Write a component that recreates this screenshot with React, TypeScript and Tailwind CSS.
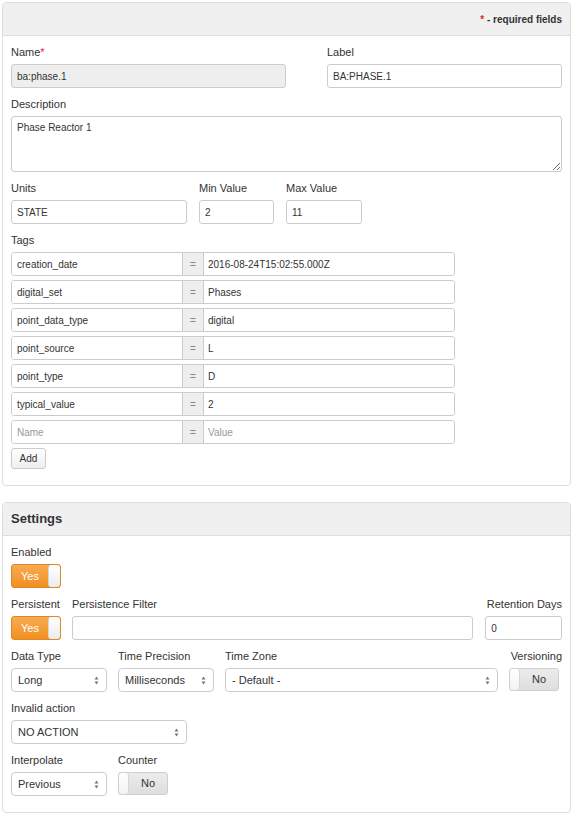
import React from 'react';

const tags: [string, string][] = [
  ['creation_date', '2016-08-24T15:02:55.000Z'],
  ['digital_set', 'Phases'],
  ['point_data_type', 'digital'],
  ['point_source', 'L'],
  ['point_type', 'D'],
  ['typical_value', '2'],
];

const Label: React.FC<{ children: React.ReactNode; className?: string }> = ({ children, className = '' }) => (
  <div className={`h-[16px] leading-[16px] text-[11px] text-[#333] mb-[4px] whitespace-nowrap ${className}`}>{children}</div>
);

const Input: React.FC<{ value?: string; placeholder?: string; className?: string; disabled?: boolean }> = ({ value, placeholder, className = '', disabled }) => (
  <div
    className={`h-[24px] border border-[#ccc] rounded-[3px] px-[5px] flex items-center text-[10px] ${disabled ? 'bg-[#eee]' : 'bg-white'} ${className}`}
  >
    {value ? <span className="text-[#333]">{value}</span> : <span className="text-[#999]">{placeholder}</span>}
  </div>
);

const Select: React.FC<{ value: string; className?: string }> = ({ value, className = '' }) => (
  <div className={`h-[24px] border border-[#ccc] rounded-[4px] bg-white pl-[6px] pr-[7px] flex items-center justify-between text-[11px] text-[#333] ${className}`}>
    <span>{value}</span>
    <svg width="5" height="9" viewBox="0 0 5 9">
      <path d="M2.5 0.5 L4.5 3.5 L0.5 3.5 Z" fill="#777" />
      <path d="M2.5 8.5 L4.5 5.5 L0.5 5.5 Z" fill="#777" />
    </svg>
  </div>
);

const Toggle: React.FC<{ on: boolean }> = ({ on }) =>
  on ? (
    <div className="w-[50px] h-[24px] rounded-[3px] border border-[#e0862a] bg-gradient-to-b from-[#f9ab4e] to-[#f0901e] flex overflow-hidden">
      <div className="flex-1 flex items-center justify-center text-white text-[11px]">Yes</div>
      <div className="w-[12px] h-full bg-gradient-to-b from-white to-[#ececec] border-l border-[#d6d6d6] rounded-[3px]" />
    </div>
  ) : (
    <div className="w-[50px] h-[23px] rounded-[3px] border border-[#cfcfcf] bg-gradient-to-b from-[#ececec] to-[#dedede] flex overflow-hidden">
      <div className="w-[10px] h-full bg-gradient-to-b from-white to-[#f2f2f2] border-r border-[#d6d6d6] rounded-[3px]" />
      <div className="flex-1 flex items-center justify-center text-[#333] text-[11px]">No</div>
    </div>
  );

const Panel: React.FC<{ header: React.ReactNode; children: React.ReactNode; className?: string }> = ({ header, children, className = '' }) => (
  <div className={`border border-[#ddd] rounded-[4px] bg-white ${className}`}>
    <div className="h-[33px] bg-[#f0f0f0] border-b border-[#ddd] rounded-t-[4px] flex items-center px-[8px]">{header}</div>
    <div className="px-[8px] pt-[8px] pb-[16px]">{children}</div>
  </div>
);

export default function App() {
  return (
    <div className="min-h-screen bg-white pl-[2px] pr-[6px] pt-[2px] text-[#333]" style={{ fontFamily: '"Liberation Sans", Arial, sans-serif' }}>
      <Panel
        header={
          <div className="ml-auto text-[10px] font-bold text-[#333]">
            <span className="text-[#e0262a]">*</span> - required fields
          </div>
        }
      >
        <div className="flex">
          <div className="w-[275px]">
            <Label>
              Name<span className="text-[#e0262a]">*</span>
            </Label>
            <Input value="ba:phase.1" disabled />
          </div>
          <div className="w-[235px] ml-[41px]">
            <Label>Label</Label>
            <Input value="BA:PHASE.1" />
          </div>
        </div>

        <div className="mt-[8px]">
          <Label>Description</Label>
          <textarea
            readOnly
            value="Phase Reactor 1"
            className="block w-[551px] h-[56px] border border-[#ccc] rounded-[3px] px-[5px] py-[5px] text-[10px] text-[#333] leading-[12px] resize-y outline-none"
          />
        </div>

        <div className="flex mt-[8px] gap-[12px]">
          <div className="w-[176px]">
            <Label>Units</Label>
            <Input value="STATE" />
          </div>
          <div className="w-[75px]">
            <Label>Min Value</Label>
            <Input value="2" />
          </div>
          <div className="w-[76px]">
            <Label>Max Value</Label>
            <Input value="11" />
          </div>
        </div>

        <div className="mt-[8px]">
          <Label>Tags</Label>
          <div className="flex flex-col gap-[4px] w-[444px]">
            {[...tags, ['', ''] as [string, string]].map(([k, v], i) => (
              <div key={i} className="h-[24px] flex border border-[#ccc] rounded-[3px] text-[10px] overflow-hidden">
                <div className="w-[170px] px-[5px] flex items-center bg-white">
                  {k ? <span className="text-[#333]">{k}</span> : <span className="text-[#999]">Name</span>}
                </div>
                <div className="w-[22px] flex items-center justify-center bg-[#eee] border-x border-[#ccc] text-[#888]">=</div>
                <div className="flex-1 px-[4px] flex items-center bg-white">
                  {v ? <span className="text-[#333]">{v}</span> : <span className="text-[#999]">Value</span>}
                </div>
              </div>
            ))}
          </div>
          <button className="mt-[4px] h-[21px] w-[35px] border border-[#ccc] rounded-[3px] bg-gradient-to-b from-white to-[#efefef] text-[10px] text-[#333] flex items-center justify-center">
            Add
          </button>
        </div>
      </Panel>

      <Panel className="mt-[16px]" header={<div className="text-[13px] font-bold text-[#333]">Settings</div>}>
        <div>
          <Label>Enabled</Label>
          <Toggle on />
        </div>

        <div className="flex mt-[8px]">
          <div className="w-[50px]">
            <Label>Persistent</Label>
            <Toggle on />
          </div>
          <div className="w-[402px] ml-[11px]">
            <Label>Persistence Filter</Label>
            <Input />
          </div>
          <div className="w-[77px] ml-[12px]">
            <Label className="text-right -ml-[10px]">Retention Days</Label>
            <Input value="0" />
          </div>
        </div>

        <div className="flex mt-[8px]">
          <div className="w-[96px]">
            <Label>Data Type</Label>
            <Select value="Long" />
          </div>
          <div className="w-[96px] ml-[11px]">
            <Label>Time Precision</Label>
            <Select value="Milliseconds" />
          </div>
          <div className="w-[273px] ml-[11px]">
            <Label>Time Zone</Label>
            <Select value="- Default -" />
          </div>
          <div className="w-[53px] ml-[11px]">
            <Label className="text-right">Versioning</Label>
            <Toggle on={false} />
          </div>
        </div>

        <div className="mt-[8px] w-[176px]">
          <Label>Invalid action</Label>
          <Select value="NO ACTION" />
        </div>

        <div className="flex mt-[8px]">
          <div className="w-[96px]">
            <Label>Interpolate</Label>
            <Select value="Previous" />
          </div>
          <div className="w-[50px] ml-[11px]">
            <Label>Counter</Label>
            <Toggle on={false} />
          </div>
        </div>
      </Panel>
    </div>
  );
}
